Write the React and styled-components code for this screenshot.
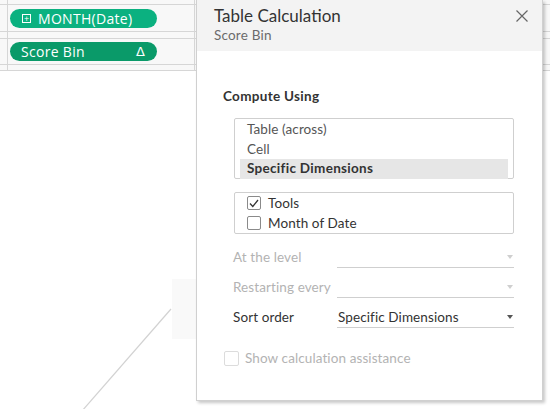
import React from "react";
import styled, { createGlobalStyle } from "styled-components";

const GlobalStyle = createGlobalStyle`
  html, body {
    margin: 0;
    padding: 0;
    background: #ffffff;
    font-family: "Lato", "Noto Sans", sans-serif;
    overflow: hidden;
  }
`;

const strips = [
  { height: 4 },
  { height: 26, pill: { label: "MONTH(Date)", plus: true, color: "#0bb180" } },
  { height: 6 },
  { height: 25, pill: { label: "Score Bin", delta: true, color: "#0a9a69" } },
  { height: 5 },
];

const computeOptions = ["Table (across)", "Cell", "Specific Dimensions"];
const dimensions = [
  { label: "Tools", checked: true },
  { label: "Month of Date", checked: false },
];
const fields = [
  { label: "At the level", value: "", disabled: true },
  { label: "Restarting every", value: "", disabled: true },
  { label: "Sort order", value: "Specific Dimensions", disabled: false },
];

const App = () => {
  return (
    <Page>
      <GlobalStyle />
      <Shelves>
        {strips.map((s, i) => (
          <Strip key={i} $height={s.height}>
            <Cell />
            <Cell>
              {s.pill && (
                <Pill $color={s.pill.color}>
                  {s.pill.plus && <PlusBox>+</PlusBox>}
                  <PillText>{s.pill.label}</PillText>
                  {s.pill.delta && <Delta>Δ</Delta>}
                </Pill>
              )}
            </Cell>
            <div />
          </Strip>
        ))}
      </Shelves>
      <Canvas>
        <svg width="550" height="339" viewBox="0 70 550 339">
          <rect x="172" y="278" width="24" height="60" fill="#f9f9f9" />
          <line x1="171" y1="308" x2="82" y2="410" stroke="#d2d2d2" strokeWidth="1.2" />
        </svg>
      </Canvas>

      <Dialog>
        <Header>
          <Title>Table Calculation</Title>
          <Subtitle>Score Bin</Subtitle>
          <CloseButton aria-label="close">
            <svg width="12" height="12" viewBox="0 0 12 12">
              <path d="M0.5 0.5 L11.5 11.5 M11.5 0.5 L0.5 11.5" stroke="#666" strokeWidth="1.2" />
            </svg>
          </CloseButton>
        </Header>
        <Body>
          <SectionTitle>Compute Using</SectionTitle>
          <ListBox>
            {computeOptions.map((o, i) => (
              <ListItem key={o} $selected={i === computeOptions.length - 1}>
                {o}
              </ListItem>
            ))}
          </ListBox>
          <CheckList>
            {dimensions.map((d) => (
              <CheckRow key={d.label}>
                <CheckBox>
                  {d.checked && (
                    <svg width="10" height="9" viewBox="0 0 10 9">
                      <path d="M1 4.5 L3.8 7.5 L9 1" fill="none" stroke="#333" strokeWidth="1.3" />
                    </svg>
                  )}
                </CheckBox>
                {d.label}
              </CheckRow>
            ))}
          </CheckList>
          <Fields>
            {fields.map((f) => (
              <FieldRow key={f.label} $disabled={f.disabled}>
                <FieldLabel>{f.label}</FieldLabel>
                <Select>
                  <span>{f.value}</span>
                  <Caret $disabled={f.disabled} />
                </Select>
              </FieldRow>
            ))}
          </Fields>
          <Assist>
            <CheckBox $disabled />
            Show calculation assistance
          </Assist>
        </Body>
      </Dialog>
    </Page>
  );
};

const Page = styled.div`
  position: relative;
  width: 550px;
  height: 409px;
  overflow: hidden;
  background: #fff;
`;
const Shelves = styled.div`
  display: flex;
  flex-direction: column;
  background: #f8f8f8;
`;
const Strip = styled.div`
  display: grid;
  grid-template-columns: 8px 187px 1fr;
  height: ${(p) => p.$height}px;
  border-bottom: 1px solid #d6d6d6;
`;
const Cell = styled.div`
  border-right: 1px solid #d6d6d6;
  display: flex;
  align-items: center;
  padding-left: 2px;
`;
const Pill = styled.div`
  display: flex;
  align-items: center;
  width: 147px;
  height: 19px;
  box-sizing: border-box;
  border-radius: 10px;
  background: ${(p) => p.$color};
  color: #fff;
  padding: 0 12px 0 11px;
  font-family: "Open Sans", "Lato", sans-serif;
  font-size: 14px;
`;
const PlusBox = styled.span`
  width: 7px;
  height: 7px;
  border: 1px solid #fff;
  display: flex;
  align-items: center;
  justify-content: center;
  font-size: 9px;
  line-height: 1;
  margin: 0 7px 0 1px;
`;
const PillText = styled.span`
  flex: 1;
  letter-spacing: 0.3px;
`;
const Delta = styled.span`
  font-size: 13px;
  font-family: "DejaVu Sans", sans-serif;
`;
const Canvas = styled.div`
  height: 339px;
  svg {
    display: block;
  }
`;
const Dialog = styled.div`
  position: absolute;
  left: 196px;
  top: 0;
  width: 347px;
  height: 401px;
  box-sizing: border-box;
  background: #fff;
  border: 1px solid #d0d0d0;
  border-top: none;
  box-shadow: 2px 2px 3px rgba(0, 0, 0, 0.22);
  display: flex;
  flex-direction: column;
`;
const Header = styled.div`
  position: relative;
  height: 51px;
  background: #f3f3f3;
  padding: 6px 0 0 17px;
  box-sizing: border-box;
`;
const Title = styled.div`
  font-size: 17px;
  color: #333;
  line-height: 20px;
`;
const Subtitle = styled.div`
  font-size: 13.5px;
  letter-spacing: 0.2px;
  color: #6b6b6b;
  line-height: 17px;
  margin-top: 1px;
`;
const CloseButton = styled.div`
  position: absolute;
  right: 14px;
  top: 10px;
  display: flex;
`;
const Body = styled.div`
  display: flex;
  flex-direction: column;
  padding: 37px 28px 0 26px;
  font-size: 13.5px;
  letter-spacing: 0.1px;
`;
const SectionTitle = styled.div`
  font-weight: 700;
  letter-spacing: 0.3px;
  color: #333;
  line-height: 17px;
`;
const ListBox = styled.div`
  margin: 13px 0 0 11px;
  border: 1px solid #cfcfcf;
  border-radius: 2px;
  padding: 1px 5px 0;
  height: 61px;
  box-sizing: border-box;
`;
const ListItem = styled.div`
  height: 19.5px;
  line-height: 19.5px;
  padding-left: 7px;
  color: ${(p) => (p.$selected ? "#333" : "#555")};
  font-weight: ${(p) => (p.$selected ? 700 : 400)};
  letter-spacing: ${(p) => (p.$selected ? "0.3px" : "0.1px")};
  background: ${(p) => (p.$selected ? "#e6e6e6" : "transparent")};
`;
const CheckList = styled.div`
  margin: 13px 0 0 11px;
  border: 1px solid #cfcfcf;
  border-radius: 2px;
  padding: 0 0 0 12px;
  height: 42px;
  box-sizing: border-box;
`;
const CheckRow = styled.div`
  display: flex;
  align-items: center;
  height: 20px;
  color: #333;
`;
const CheckBox = styled.span`
  width: 14px;
  height: 14px;
  box-sizing: border-box;
  border: 1px solid ${(p) => (p.$disabled ? "#dcdcdc" : "#8a8a8a")};
  border-radius: 2px;
  display: flex;
  align-items: center;
  justify-content: center;
  margin-right: 7px;
  background: #fff;
`;
const Fields = styled.div`
  display: flex;
  flex-direction: column;
  margin: 12px 0 0 10px;
  gap: 8px;
`;
const FieldRow = styled.div`
  display: flex;
  align-items: stretch;
  height: 22px;
  color: ${(p) => (p.$disabled ? "#b3b3b3" : "#333")};
`;
const FieldLabel = styled.div`
  width: 104px;
  line-height: 22px;
`;
const Select = styled.div`
  flex: 1;
  display: flex;
  align-items: center;
  justify-content: space-between;
  padding: 0 1px 0 1px;
  border-bottom: 1px solid #cfcfcf;
  span {
    line-height: 22px;
  }
`;
const Caret = styled.i`
  width: 0;
  height: 0;
  border-left: 3.5px solid transparent;
  border-right: 3.5px solid transparent;
  border-top: 4px solid ${(p) => (p.$disabled ? "#cfcfcf" : "#555")};
`;
const Assist = styled.div`
  display: flex;
  align-items: center;
  margin: 22px 0 0 1px;
  color: #b3b3b3;
  ${CheckBox} {
    width: 15px;
    height: 15px;
    margin-right: 6px;
  }
`;

export default App;
